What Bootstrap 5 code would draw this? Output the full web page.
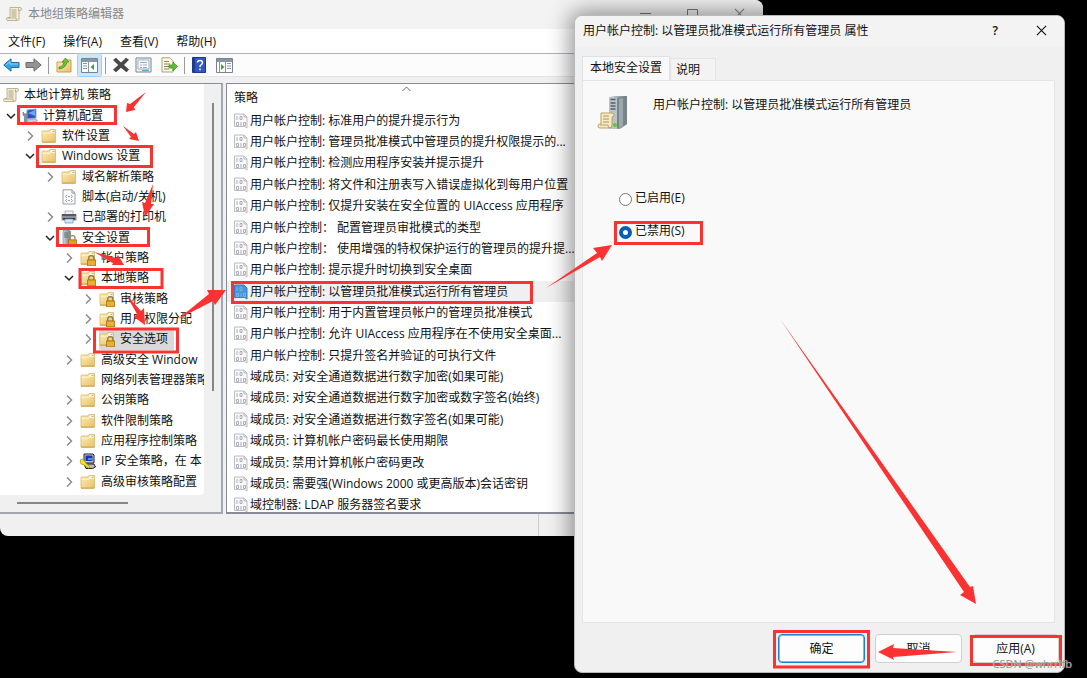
<!DOCTYPE html>
<html lang="zh-CN">
<head>
<meta charset="utf-8">
<meta name="viewport" content="width=device-width, initial-scale=1">
<title>本地组策略编辑器</title>
<link href="https://cdn.jsdelivr.net/npm/bootstrap@5.3.0/dist/css/bootstrap.min.css" rel="stylesheet">
<style>
body{font:12px/16px "Open Sans","Noto Sans CJK SC",sans-serif;color:#111;background:#000}
.desktop{height:100vh;min-height:560px}
.editor{margin-right:324px;height:calc(100% - 142px);background:#f0f0f0;border-radius:0 8px 8px 8px}
.caption{height:29px;background:#f3f3f3;color:#888;padding:0 18px 2px 6px}
.caption .ico{margin-right:6px}
.caption-controls{gap:36px}
.plain-btn{border:0;background:none;padding:0;color:inherit;line-height:16px;display:flex;align-items:center}
.menu-row{height:25px;background:#fff;gap:18px;padding:1px 8px 0;border-bottom:1px solid #aeb1b8}
.tool-row{height:23px;background:#fcfcfc;padding:0 3px;gap:5px;border-bottom:1px solid #e4e4e4}
.tool-row .on{background:#cce6f9;outline:1px solid #9fd0f3;border-radius:2px;height:22px;padding:0 3px;margin-right:-2px}
.divider{width:1px;height:17px;background:#9a9a9a;margin:0 1px}
.panes{margin-top:6px;gap:3px}
.tree-pane{width:223px;border:1px solid #868d99;border-width:1px 2px 2px 0;border-color:#868d99 #a2a7af #a2a7af}
.tree-view{width:204px;background:#fff;padding:1px 0 3px;border-radius:0 0 4px 0}
.tree-list,.policy-list{display:grid;grid-auto-rows:1fr;list-style:none;margin:0;padding:0;white-space:nowrap}
.tree-list li{display:flex;align-items:center;min-height:0}
.tree-list svg,.policy-list svg{flex:none}
.chev{width:14px;height:14px;margin-right:4px;fill:none;stroke:#8b8b8b;stroke-width:1.5}
.chev.open{stroke:#222}
.ico{width:16px;height:16px;margin-right:5px}
.lv0{padding-left:3px}.lv1{padding-left:4px}.lv2{padding-left:23px}.lv3{padding-left:43px}.lv4{padding-left:62px}.lv5{padding-left:81px}
.picked{background:#d9d9d9;padding-right:6px}
.scroll-y{width:17px;padding-top:19px}
.scroll-y div{width:2px;height:288px;background:#868686}
.scroll-x{height:17px;padding:7px 0 0 17px}
.scroll-x div{width:111px;height:2px;background:#868686}
.list-pane{border:1px solid #868d99;border-width:1px 0 2px 1px;background:#fff}
.list-head{height:26px;padding:6px 0 0 7px}
.sort{left:175px;top:2px;fill:none;stroke:#666}
.policy-list{margin-bottom:-4px}
.policy-list li{display:flex;align-items:center;min-height:0;padding-left:6px}
.policy-list .ico{margin-right:1px}
.policy-list .current{background:#f0f0f0}
.status{height:22px}
.status div{width:225px;border-left:1px solid #ccc}
.dialog{top:15px;right:22px;bottom:5px;width:491px;background:#f0f0f0;border-radius:8px;border:1px solid #b9b9b9;box-shadow:0 0 22px 4px rgba(0,0,0,.42);overflow:hidden;z-index:2}
.dialog-title{height:31px;background:#f3f3f3;padding:0 17px 2px 8px}
.dialog-title .closer{margin-left:38px}
.prop-tabs{padding:9px 7px 0;border:0;margin-bottom:-1px;align-items:flex-end}
.prop-tabs .nav-link{font-size:12px;line-height:16px;color:#111;background:#f3f3f3;border:1px solid #e4e4e4;border-radius:0;margin:0;padding:3px 15px 2px 5px}
.prop-tabs .nav-link.active{background:#f9f9f9;border-bottom-color:#f9f9f9;color:#111;padding:3px 7px 4px}
.prop-page{margin:0 9px 0 7px;background:#f9f9f9;border:1px solid #e4e4e4}
.prop-head{padding:14px 14px 0;gap:22px}
.prop-name{padding-top:2px}
.choices{padding:57px 0 0 36px;gap:13px}
.choices .form-check{min-height:20px;margin:0;padding:0;display:flex;align-items:center;gap:3px}
.choices .form-check-input{float:none;margin:2px 0 0;width:13px;height:13px;border:1px solid #777;box-shadow:none;background-image:none}
.choices .form-check-input:checked{border:4px solid #0560b4;background:#fff}
.dialog-actions{padding:11px 5px 9px;gap:10px}
.dialog-actions .btn{width:87px;height:29px;font-size:12px;line-height:16px;padding:0;background:#fdfdfd;border:1px solid #cfcfcf;border-radius:4px;color:#111}
.dialog-actions .default{border-color:#1a80d0;box-shadow:inset 0 0 0 1px #7db9e8}
.marks{z-index:3;pointer-events:none}
.marks rect{fill:none;stroke:#fb3232;stroke-width:3}
.marks polygon{fill:#fb3232}
.watermark{right:15px;bottom:6px;z-index:4;color:#8d8d8d;font-size:11px;text-shadow:0 0 1px #fff}
</style>
</head>
<body>
<svg class="position-absolute" width="0" height="0" xmlns="http://www.w3.org/2000/svg" aria-hidden="true">
  <defs>
    <linearGradient id="gold" x1="0" y1="0" x2="1" y2="1"><stop offset="0" stop-color="#ffeeb5"/><stop offset="1" stop-color="#e6c06c"/></linearGradient>
    <linearGradient id="steel" x1="0" y1="0" x2="1" y2="0"><stop offset="0" stop-color="#d3dadd"/><stop offset="1" stop-color="#6e7a80"/></linearGradient>
  </defs>
  <symbol id="folder" viewBox="0 0 16 16"><path d="M1 3.5Q1 3 1.5 3H8l1-1.500h5.500V14H1z" fill="url(#gold)" stroke="#d9b566" stroke-width=".8"/><path d="M9.500 2.500h4v2h-4z" fill="#fff"/><path d="M11.500 3h2v1h-2z" fill="#5aa2dc"/><path d="M1.500 5.200H9l1-1h4" fill="none" stroke="#fff6d5"/><path d="M1 14.200h13.500" stroke="#c9a04c"/></symbol>
  <symbol id="folder-lock" viewBox="0 0 16 16"><use href="#folder"/><path d="M8.700 10V8.200a2.600 2.600 0 0 1 5.200 0V10" fill="none" stroke="#8f7a45" stroke-width="1.300"/><path d="M7.500 9.800h8V16h-8z" fill="#dfa31e" stroke="#99690e" stroke-width=".7"/><path d="M8 12h7M8 14h7" stroke="#f3ca5d" stroke-width=".7"/></symbol>
  <symbol id="scroll" viewBox="0 0 16 16"><path d="M4 1.500h10q1.500 0 1.500 1.500T14 4.500h-1V13q0 1.500-1.500 1.500H2Q.5 14.500.5 13T2 11.500h2z" fill="#f6efd3" stroke="#b5ac8e" stroke-width=".9"/><path d="M12.500 2.500V5M2 12h8q0 2 1.500 2" fill="none" stroke="#a49b7a" stroke-width=".8"/><path d="M5.500 4h5M5.500 6h5M5.500 8h5M5.500 10h5" stroke="#9c9886" stroke-width=".9"/></symbol>
  <symbol id="pc" viewBox="0 0 16 16"><path d="M5 2l9-1v9l-9 1z" fill="#2b50c8" stroke="#9aa5b5"/><path d="M6 5l7-3v6z" fill="#6aa6f2"/><path d="M5 12l9-1 1.500 2-9 2z" fill="#ccd2d9" stroke="#818a96" stroke-width=".6"/><path d="M1 4v3l1.500 1.500V15h2V8.500L6 7V4L4.500 6h-2z" fill="#8796a2" stroke="#5b6873" stroke-width=".6"/></symbol>
  <symbol id="script" viewBox="0 0 16 16"><path d="M2 .8h9L14 4v11H2z" fill="#fafbfc" stroke="#9c9fa6"/><path d="M11 1v3h3M6 6L4.500 7.500 6 9M10 6l1.500 1.500L10 9M7 7.500h2M6 10l-1.500 1.500L6 13M10 10l1.500 1.500L10 13M7 11.500h2" fill="none" stroke="#8c919b" stroke-width=".9"/></symbol>
  <symbol id="printer" viewBox="0 0 16 16"><path d="M4 2h8v4H4z" fill="#eef1f3" stroke="#888" stroke-width=".6"/><path d="M.5 5.500h15v6H.5z" fill="#8c9297"/><path d="M1 5h14v2H1z" fill="#555b60"/><path d="M2 9h12v1.500H2z" fill="#2f3438"/><path d="M4 10h8v4H4z" fill="#cfe8f8" stroke="#6594b4" stroke-width=".7"/></symbol>
  <symbol id="server-lock" viewBox="0 0 16 16"><path d="M2 .5l6-.3 1.500 1V15H2z" fill="url(#steel)" stroke="#768189" stroke-width=".6"/><path d="M3 3h4M3 5h4M3 7h4" stroke="#4e5b63" stroke-width=".8"/><path d="M9 10V8.200a2.500 2.500 0 0 1 5 0V10" fill="none" stroke="#a28b5a" stroke-width="1.300"/><path d="M7.500 9.800H15.500V16h-8z" fill="#dfa31e" stroke="#99690e" stroke-width=".7"/></symbol>
  <symbol id="ipsec" viewBox="0 0 16 16"><path d="M4 1h9l1 1v8H4z" fill="#c9c9c9" stroke="#222"/><path d="M5.500 2.500h7v5.500h-7z" fill="#1634b0"/><path d="M8 5h4v2H8z" fill="#2da5e0"/><path d="M4 11h10l1.500 3-3 1.500H6z" fill="#bbb" stroke="#222"/><path d="M0 7l3-1 3 4 4 4-1 1.500-5-3.500-3-1z" fill="#f4e21c" stroke="#786b00" stroke-width=".5"/></symbol>
  <symbol id="policy" viewBox="0 0 16 16"><path d="M1.500 1h9.500l3 3v11l-2.500-1.500H1.500z" fill="#fafafb" stroke="#b4b4bb" stroke-width=".9"/><path d="M11 1v3h3" fill="none" stroke="#b4b4bb"/><path d="M4 3v4M7 3.500h2v3H7zM3.500 9.500h2v3h-2zM8 9v4M10.500 9.500h2v3h-2z" fill="none" stroke="#a2a5b6" stroke-width=".9"/></symbol>
  <symbol id="policy-on" viewBox="0 0 16 16"><path d="M1.500 1h9.500l3 3v11l-2.500-1.500H1.500z" fill="#4796d8" stroke="#2f7fc6"/><path d="M4 3v4M7 3.500h2v3H7zM3.500 9.500h2v3h-2zM8 9v4M10.500 9.500h2v3h-2z" fill="none" stroke="#7db8e8" stroke-width=".9"/></symbol>
  <symbol id="right" viewBox="0 0 14 14"><path d="M5 2.500L9.500 7 5 11.500"/></symbol>
  <symbol id="down" viewBox="0 0 14 14"><path d="M3 5l4 4 4-4"/></symbol>
  <symbol id="cross" viewBox="0 0 12 12"><path d="M1 1l10 10M11 1L1 11" fill="none" stroke="currentColor" stroke-width="1.200"/></symbol>
</svg>

<div class="desktop position-relative overflow-hidden">
  <main class="editor d-flex flex-column overflow-hidden">
    <header class="caption d-flex align-items-center">
      <svg class="ico" aria-hidden="true"><use href="#scroll"/></svg>
      <span>本地组策略编辑器</span>
      <div class="caption-controls d-flex ms-auto">
        <button class="plain-btn" aria-label="最小化"><svg width="11" height="12"><path d="M0 5.500h11" stroke="#777"/></svg></button>
        <button class="plain-btn" aria-label="最大化"><svg width="11" height="12"><path d="M.5 1.500h10v10H.5z" fill="none" stroke="#777"/></svg></button>
        <button class="plain-btn" aria-label="关闭"><svg width="11" height="11"><use href="#cross"/></svg></button>
      </div>
    </header>
    <nav class="menu-row d-flex align-items-center">
      <button class="plain-btn">文件(F)</button><button class="plain-btn">操作(A)</button><button class="plain-btn">查看(V)</button><button class="plain-btn">帮助(H)</button>
    </nav>
    <div class="tool-row d-flex align-items-center">
      <button class="plain-btn" aria-label="后退"><svg width="17" height="16" viewBox="0 0 17 16"><path d="M.8 8L8 1.800V5.500h8v5H8v3.700z" fill="#36a3e8" stroke="#1f6fae"/><path d="M3 8l4-3.500V7h8" fill="none" stroke="#8fd2fb"/></svg></button>
      <button class="plain-btn" aria-label="前进"><svg width="17" height="16" viewBox="0 0 17 16"><path d="M16.200 8L9 1.800V5.500H1v5h8v3.700z" fill="#949494" stroke="#6d6d6d"/></svg></button>
      <span class="divider"></span>
      <button class="plain-btn" aria-label="向上一级"><svg width="18" height="16" viewBox="0 0 18 16"><path d="M2 5h6l1.500-2H16v12H2z" fill="url(#gold)" stroke="#c9a04c"/><path d="M4 10q4 0 5-5H7l3.500-4L14 5h-2q-1 6-8 7z" fill="#6cc23a" stroke="#3d8a1d" stroke-width=".7"/></svg></button>
      <button class="plain-btn on" aria-label="显示控制台树"><svg width="17" height="15" viewBox="0 0 17 15"><path d="M.5.5h16v14H.5z" fill="#fff" stroke="#79838e"/><path d="M1 1h15v3H1z" fill="#8895a3"/><path d="M2 5.500h4M2 8h4M2 10.500h4M7.500 4v10" stroke="#8895a3"/><path d="M13 6v6L9.500 9z" fill="#37a632"/></svg></button>
      <span class="divider"></span>
      <button class="plain-btn" aria-label="删除"><svg width="18" height="16" viewBox="0 0 18 16"><path d="M1 3L4 .8 9 5.500 14 .8l3 2L12 8l5 4.500-2.500 2.700L9 10.700l-5 4.500-3-2.500L6.200 8z" fill="#484848"/></svg></button>
      <button class="plain-btn" aria-label="属性"><svg width="17" height="16" viewBox="0 0 17 16"><path d="M1 1h15v14H1z" fill="#f4f6f8" stroke="#7b828a"/><path d="M3 3h11v9H3z" fill="#fff" stroke="#a1adb8"/><path d="M5 5.500h7M5 8h2M8 8h4M5 10.500h2M8 10.500h4" stroke="#8fa9bd"/><path d="M7 13.500h7" stroke="#54a9dd" stroke-width="1.500"/></svg></button>
      <button class="plain-btn ms-1" aria-label="导出列表"><svg width="17" height="16" viewBox="0 0 17 16"><path d="M1 .8h8l3 3V15H1z" fill="#fff8dc" stroke="#aaa27e"/><path d="M3 4.500h5M3 7h6M3 9.500h5M3 12h5" stroke="#858573"/><path d="M8 8h4V5l4.500 4.500L12 14v-3H8z" fill="#5cc034" stroke="#3c911d" stroke-width=".7"/></svg></button>
      <span class="divider"></span>
      <button class="plain-btn" aria-label="帮助"><svg width="16" height="16" viewBox="-1 0 16 16"><path d="M.5.5h13v15H.5z" fill="#3158bd" stroke="#1d398c"/><path d="M1 1h2v14H1z" fill="#1f3c91"/><path d="M5.500 5.500Q5.500 3.500 8 3.500t2.500 2Q10.500 7 9 7.800 8 8.300 8 10M8 11.500v1.700" fill="none" stroke="#fff" stroke-width="1.500"/></svg></button>
      <button class="plain-btn ms-1" aria-label="显示操作窗格"><svg width="17" height="15" viewBox="0 0 17 15"><path d="M.5.5h16v14H.5z" fill="#fff" stroke="#79838e"/><path d="M1 1h15v3H1z" fill="#8895a3"/><path d="M11 5.500h4M11 8h4M11 10.500h4M9.500 4v10M3.500 4v10" stroke="#8895a3"/><path d="M5 6v6l3.500-3z" fill="#37a632"/></svg></button>
    </div>

    <div class="panes d-flex flex-grow-1 overflow-hidden">
      <section class="tree-pane d-flex flex-column flex-shrink-0">
        <div class="d-flex flex-grow-1 overflow-hidden">
          <div class="tree-view d-flex overflow-hidden">
            <ul class="tree-list">
              <li class="lv0"><svg class="ico"><use href="#scroll"/></svg>本地计算机 策略</li>
              <li class="lv1"><svg class="chev open"><use href="#down"/></svg><svg class="ico"><use href="#pc"/></svg>计算机配置</li>
              <li class="lv2"><svg class="chev"><use href="#right"/></svg><svg class="ico"><use href="#folder"/></svg>软件设置</li>
              <li class="lv2"><svg class="chev open"><use href="#down"/></svg><svg class="ico"><use href="#folder"/></svg>Windows 设置</li>
              <li class="lv3"><svg class="chev"><use href="#right"/></svg><svg class="ico"><use href="#folder"/></svg>域名解析策略</li>
              <li class="lv3"><svg class="chev"></svg><svg class="ico"><use href="#script"/></svg>脚本(启动/关机)</li>
              <li class="lv3"><svg class="chev"><use href="#right"/></svg><svg class="ico"><use href="#printer"/></svg>已部署的打印机</li>
              <li class="lv3"><svg class="chev open"><use href="#down"/></svg><svg class="ico"><use href="#server-lock"/></svg>安全设置</li>
              <li class="lv4"><svg class="chev"><use href="#right"/></svg><svg class="ico"><use href="#folder-lock"/></svg>帐户策略</li>
              <li class="lv4"><svg class="chev open"><use href="#down"/></svg><svg class="ico"><use href="#folder-lock"/></svg>本地策略</li>
              <li class="lv5"><svg class="chev"><use href="#right"/></svg><svg class="ico"><use href="#folder-lock"/></svg>审核策略</li>
              <li class="lv5"><svg class="chev"><use href="#right"/></svg><svg class="ico"><use href="#folder-lock"/></svg>用户权限分配</li>
              <li class="lv5"><svg class="chev"><use href="#right"/></svg><span class="picked d-flex align-items-center h-100"><svg class="ico"><use href="#folder-lock"/></svg>安全选项</span></li>
              <li class="lv4"><svg class="chev"><use href="#right"/></svg><svg class="ico"><use href="#folder"/></svg>高级安全 Window</li>
              <li class="lv4"><svg class="chev"></svg><svg class="ico"><use href="#folder"/></svg>网络列表管理器策略</li>
              <li class="lv4"><svg class="chev"><use href="#right"/></svg><svg class="ico"><use href="#folder"/></svg>公钥策略</li>
              <li class="lv4"><svg class="chev"><use href="#right"/></svg><svg class="ico"><use href="#folder"/></svg>软件限制策略</li>
              <li class="lv4"><svg class="chev"><use href="#right"/></svg><svg class="ico"><use href="#folder"/></svg>应用程序控制策略</li>
              <li class="lv4"><svg class="chev"><use href="#right"/></svg><svg class="ico"><use href="#ipsec"/></svg>IP 安全策略，在 本</li>
              <li class="lv4"><svg class="chev"><use href="#right"/></svg><svg class="ico"><use href="#folder"/></svg>高级审核策略配置</li>
            </ul>
          </div>
          <div class="scroll-y d-flex justify-content-center"><div></div></div>
        </div>
        <div class="scroll-x"><div></div></div>
      </section>

      <section class="list-pane position-relative d-flex flex-column flex-grow-1 overflow-hidden">
        <div class="list-head flex-shrink-0">策略</div>
        <svg class="sort position-absolute" width="9" height="6"><path d="M.5 5l4-4 4 4"/></svg>
        <ul class="policy-list flex-grow-1">
          <li><svg class="ico"><use href="#policy"/></svg>用户帐户控制: 标准用户的提升提示行为</li>
          <li><svg class="ico"><use href="#policy"/></svg>用户帐户控制: 管理员批准模式中管理员的提升权限提示的...</li>
          <li><svg class="ico"><use href="#policy"/></svg>用户帐户控制: 检测应用程序安装并提示提升</li>
          <li><svg class="ico"><use href="#policy"/></svg>用户帐户控制: 将文件和注册表写入错误虚拟化到每用户位置</li>
          <li><svg class="ico"><use href="#policy"/></svg>用户帐户控制: 仅提升安装在安全位置的 UIAccess 应用程序</li>
          <li><svg class="ico"><use href="#policy"/></svg>用户帐户控制： 配置管理员审批模式的类型</li>
          <li><svg class="ico"><use href="#policy"/></svg>用户帐户控制： 使用增强的特权保护运行的管理员的提升提...</li>
          <li><svg class="ico"><use href="#policy"/></svg>用户帐户控制: 提示提升时切换到安全桌面</li>
          <li class="current"><svg class="ico"><use href="#policy-on"/></svg>用户帐户控制: 以管理员批准模式运行所有管理员</li>
          <li><svg class="ico"><use href="#policy"/></svg>用户帐户控制: 用于内置管理员帐户的管理员批准模式</li>
          <li><svg class="ico"><use href="#policy"/></svg>用户帐户控制: 允许 UIAccess 应用程序在不使用安全桌面...</li>
          <li><svg class="ico"><use href="#policy"/></svg>用户帐户控制: 只提升签名并验证的可执行文件</li>
          <li><svg class="ico"><use href="#policy"/></svg>域成员: 对安全通道数据进行数字加密(如果可能)</li>
          <li><svg class="ico"><use href="#policy"/></svg>域成员: 对安全通道数据进行数字加密或数字签名(始终)</li>
          <li><svg class="ico"><use href="#policy"/></svg>域成员: 对安全通道数据进行数字签名(如果可能)</li>
          <li><svg class="ico"><use href="#policy"/></svg>域成员: 计算机帐户密码最长使用期限</li>
          <li><svg class="ico"><use href="#policy"/></svg>域成员: 禁用计算机帐户密码更改</li>
          <li><svg class="ico"><use href="#policy"/></svg>域成员: 需要强(Windows 2000 或更高版本)会话密钥</li>
          <li><svg class="ico"><use href="#policy"/></svg>域控制器: LDAP 服务器签名要求</li>
        </ul>
      </section>
    </div>
    <footer class="status d-flex justify-content-end"><div></div></footer>
  </main>

  <section class="dialog position-absolute d-flex flex-column" role="dialog" aria-label="属性">
    <header class="dialog-title d-flex align-items-center flex-shrink-0">
      <span>用户帐户控制: 以管理员批准模式运行所有管理员 属性</span>
      <button class="plain-btn ms-auto fw-semibold" aria-label="帮助">?</button>
      <button class="plain-btn closer" aria-label="关闭"><svg width="11" height="11"><use href="#cross"/></svg></button>
    </header>
    <ul class="nav nav-tabs prop-tabs flex-shrink-0">
      <li class="nav-item"><a class="nav-link active" href="#local">本地安全设置</a></li>
      <li class="nav-item"><a class="nav-link" href="#explain">说明</a></li>
    </ul>
    <div class="prop-page flex-grow-1" id="local">
      <div class="prop-head d-flex">
        <svg width="34" height="36" viewBox="0 0 34 36" class="flex-shrink-0" aria-hidden="true">
          <path d="M12 2l6-1h12v28l-7 5H12z" fill="url(#steel)"/><path d="M12 2l8 1v31h-8z" fill="#b9c3c8"/><path d="M20 3l10-2v28l-10 5z" fill="#78868c"/><path d="M22 4l4-1v28l-4 2z" fill="#9ba8ad"/>
          <path d="M13.500 4.500h5M13.500 8h5M13.500 11h5M13.500 14h5" stroke="#536269" stroke-width="1.500"/><circle cx="18" cy="30" r="2" fill="#66c92f"/>
          <path d="M4 18h11q2 0 2 2t-2 2v8q0 3-3 3H3q-2 0-2-2t2-2h1z" fill="#f8eac3" stroke="#b8a06b"/><path d="M6 21h6M6 24h6M6 27h6" stroke="#a4946b"/><path d="M3 30h8q0 3 2 3" fill="none" stroke="#b8a06b"/>
        </svg>
        <span class="prop-name">用户帐户控制: 以管理员批准模式运行所有管理员</span>
      </div>
      <div class="choices d-flex flex-column">
        <div class="form-check"><input class="form-check-input" type="radio" name="policy" id="enabled"><label for="enabled">已启用(E)</label></div>
        <div class="form-check"><input class="form-check-input" type="radio" name="policy" id="disabled-opt" checked><label for="disabled-opt">已禁用(S)</label></div>
      </div>
    </div>
    <footer class="dialog-actions d-flex justify-content-end flex-shrink-0">
      <button class="btn default">确定</button><button class="btn">取消</button><button class="btn">应用(A)</button>
    </footer>
  </section>

  <svg class="marks position-absolute top-0 start-0 w-100 h-100" viewBox="0 0 1087 678" preserveAspectRatio="none" aria-hidden="true">
    <rect x="18.500" y="106.500" width="97" height="17"/>
    <rect x="37.500" y="146.500" width="114" height="20"/>
    <rect x="57.500" y="228.500" width="91" height="17"/>
    <rect x="80" y="269.500" width="82" height="18"/>
    <rect x="94.500" y="329" width="83" height="23"/>
    <rect x="232.500" y="282.500" width="299" height="20"/>
    <rect x="615.500" y="222.500" width="86" height="21"/>
    <rect x="774.500" y="631.500" width="94" height="35.500"/>
    <rect x="971.500" y="636.500" width="89" height="28"/>
    <polygon points="146,92 134,107 135,110 126,112 127,103 130,104"/>
    <polygon points="123,126 134,134 136,132 139,141 129,139 131,137"/>
    <polygon points="153,184 151,204 154,204 145,217 142,202 145,203"/>
    <polygon points="94,252 116,258 118,255 124,265 112,265 113,263"/>
    <polygon points="125,293 141,311 144,308 145,325 134,317 137,314"/>
    <polygon points="178,319 209,294 207,290 226,290 215,305 213,301"/>
    <polygon points="546,288 597,253 593,248 612,245 602,261 600,257"/>
    <polygon points="780,319 970,587 973,586 976,604 960,595 964,592"/>
    <polygon points="957,652 893,648 894,644 878,652 894,660 893,657"/>
  </svg>
  <span class="watermark position-absolute">CSDN @whrrlfb</span>
</div>
<script src="https://cdn.jsdelivr.net/npm/bootstrap@5.3.0/dist/js/bootstrap.bundle.min.js"></script>
</body>
</html>
